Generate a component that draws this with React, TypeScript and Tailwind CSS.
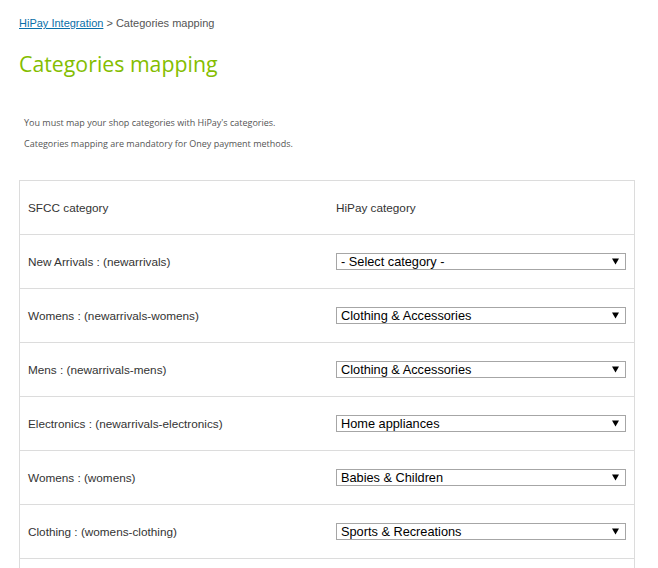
import React from 'react';

const CATEGORY_OPTIONS = [
  '- Select category -',
  'Clothing & Accessories',
  'Home appliances',
  'Babies & Children',
  'Sports & Recreations',
  'Food & Groceries',
  'Computers & Electronics',
];

interface MappingRow {
  label: string;
  value: string;
}

const rows: MappingRow[] = [
  { label: 'New Arrivals : (newarrivals)', value: '- Select category -' },
  { label: 'Womens : (newarrivals-womens)', value: 'Clothing & Accessories' },
  { label: 'Mens : (newarrivals-mens)', value: 'Clothing & Accessories' },
  { label: 'Electronics : (newarrivals-electronics)', value: 'Home appliances' },
  { label: 'Womens : (womens)', value: 'Babies & Children' },
  { label: 'Clothing : (womens-clothing)', value: 'Sports & Recreations' },
];

const CategorySelect: React.FC<{ value: string }> = ({ value }) => (
  <div className="relative w-[290px]">
    <select
      defaultValue={value}
      className="block h-[17px] w-full appearance-none rounded-none border border-[#a6a6a6] bg-white pl-[4px] pr-5 text-[12.75px] leading-[15px] text-black outline-none"
      style={{ fontFamily: '"Liberation Sans", Arial, sans-serif' }}
    >
      {CATEGORY_OPTIONS.map((opt) => (
        <option key={opt} value={opt}>{opt}</option>
      ))}
    </select>
    <svg className="pointer-events-none absolute right-[7px] top-[5px]" width="7" height="7" viewBox="0 0 7 7">
      <path d="M0 0.5 H7 L3.5 6.5 Z" fill="#000" />
    </svg>
  </div>
);

export default function App() {
  return (
    <div className="h-[568px] overflow-hidden bg-white pl-[19px] pr-[23px] pt-[16px]">
      <div className="text-[11px] leading-[14px] text-[#555]" style={{ fontFamily: '"Liberation Sans", Arial, sans-serif' }}>
        <a href="#" className="text-[#0a6fa8] underline">HiPay Integration</a> &gt; Categories mapping
      </div>

      <h1 className="mt-[20px] text-[21.3px] leading-[28px] text-[#84bd00]" style={{ fontFamily: '"Open Sans", sans-serif' }}>
        Categories mapping
      </h1>

      <div className="mt-[38px] pl-[5px] text-[9px] leading-[14px] text-[#555]" style={{ fontFamily: '"Open Sans", sans-serif' }}>
        <p>You must map your shop categories with HiPay's categories.</p>
        <p className="mt-[7px]">Categories mapping are mandatory for Oney payment methods.</p>
      </div>

      <div
        className="mt-[29px] border border-[#dcdcdc] text-[11.75px] text-[#333]"
        style={{ fontFamily: '"Liberation Sans", Arial, sans-serif' }}
      >
        <div className="grid h-[53px] grid-cols-2 items-center">
          <div className="pl-[8px]">SFCC category</div>
          <div className="pl-[9px]">HiPay category</div>
        </div>
        {rows.map((row) => (
          <div key={row.label} className="grid h-[54px] grid-cols-2 items-center border-t border-[#dcdcdc]">
            <div className="pl-[8px]">{row.label}</div>
            <div className="pl-[9px]">
              <CategorySelect value={row.value} />
            </div>
          </div>
        ))}
        <div className="h-[54px] border-t border-[#dcdcdc]" />
      </div>
    </div>
  );
}
